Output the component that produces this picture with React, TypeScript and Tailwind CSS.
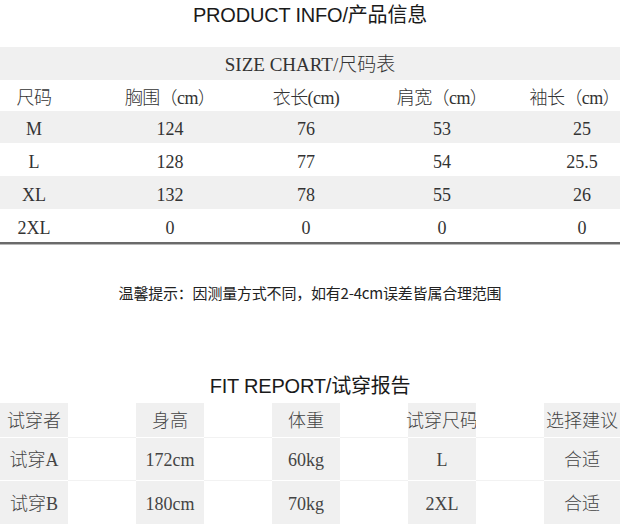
import React from "react";

const sizeRows: { cells: string[]; bg: string; h: string }[] = [
  { cells: ["尺码", "胸围（cm）", "衣长(cm)", "肩宽（cm）", "袖长（cm）"], bg: "bg-white", h: "h-[31px]" },
  { cells: ["M", "124", "76", "53", "25"], bg: "bg-[#f0f0f0]", h: "h-[32px]" },
  { cells: ["L", "128", "77", "54", "25.5"], bg: "bg-white", h: "h-[33px]" },
  { cells: ["XL", "132", "78", "55", "26"], bg: "bg-[#f0f0f0]", h: "h-[33px]" },
  { cells: ["2XL", "0", "0", "0", "0"], bg: "bg-white", h: "h-[33px]" },
];

const fitRows: { cells: string[]; h: string; first: boolean }[] = [
  { cells: ["试穿者", "身高", "体重", "试穿尺码", "选择建议"], h: "h-[34px]", first: true },
  { cells: ["试穿A", "172cm", "60kg", "L", "合适"], h: "h-[43px]", first: false },
  { cells: ["试穿B", "180cm", "70kg", "2XL", "合适"], h: "h-[44px]", first: false },
];

const serif = "font-['Liberation_Serif','Noto_Sans_CJK_SC',serif]";

export default function App() {
  return (
    <div className="w-[620px] h-[524px] overflow-hidden bg-white">
      <div className="h-[47px] flex justify-center">
        <div className="h-[29px] flex items-center text-[20px] text-[#1a1a1a] font-['Liberation_Sans','Noto_Sans_CJK_SC',sans-serif] tracking-[-0.2px]">
          PRODUCT INFO/产品信息
        </div>
      </div>

      <div className={`${serif} text-[#333]`}>
        <div className="h-[33px] bg-[#f0f0f0] flex items-center justify-center pt-[3px] text-[19px] font-light">
          SIZE CHART/尺码表
        </div>
        {sizeRows.map((r, ri) => (
          <div key={ri} className={`grid grid-cols-[repeat(8,68px)_minmax(0,1fr)] ${r.bg} ${r.h}`}>
            {Array.from({ length: 9 }).map((_, i) => {
              if (ri === 0 && i === 7) return null;
              if (i % 2 === 1) return <div key={i} />;
              const lastHead = ri === 0 && i === 8;
              return (
                <div
                  key={i}
                  className={`min-w-0 flex items-center whitespace-nowrap pt-[5px] text-[18px] font-light ${
                    ri === 0 ? "tracking-[-0.6px]" : ""
                  } ${lastHead ? "col-start-8 col-span-2 justify-end" : "justify-center"}`}
                >
                  {r.cells[i / 2]}
                </div>
              );
            })}
          </div>
        ))}
        <div className="h-[2px] bg-[#6a6a6a]" />
        <div className="h-px bg-[#b8b8b8]" />
      </div>

      <div className="mt-[38px] h-[20px] flex items-center justify-center text-[15px] text-[#222] font-['Noto_Sans_CJK_SC',sans-serif] tracking-[-0.2px]">
        温馨提示：因测量方式不同，如有2-4cm误差皆属合理范围
      </div>

      <div className="mt-[68px] h-[32px] flex justify-center">
        <div className="h-[29px] flex items-center text-[20px] text-[#1a1a1a] font-['Liberation_Sans','Noto_Sans_CJK_SC',sans-serif] tracking-[-0.2px]">
          FIT REPORT/试穿报告
        </div>
      </div>

      <div className={`${serif} text-[#444]`}>
        {fitRows.map((r, ri) => (
          <div key={ri} className={`grid grid-cols-[repeat(8,68px)_minmax(0,1fr)] ${r.h}`}>
            {Array.from({ length: 9 }).map((_, i) =>
              i % 2 === 0 ? (
                <div
                  key={i}
                  className={`bg-[#f0f0f0] flex items-center justify-center whitespace-nowrap pt-[3px] text-[18px] font-light ${
                    r.first ? "" : "border-t border-white"
                  }`}
                >
                  {r.cells[i / 2]}
                </div>
              ) : (
                <div key={i} className={`bg-white ${r.first ? "" : "border-t border-[#f2f2f2]"}`} />
              )
            )}
          </div>
        ))}
      </div>
    </div>
  );
}
